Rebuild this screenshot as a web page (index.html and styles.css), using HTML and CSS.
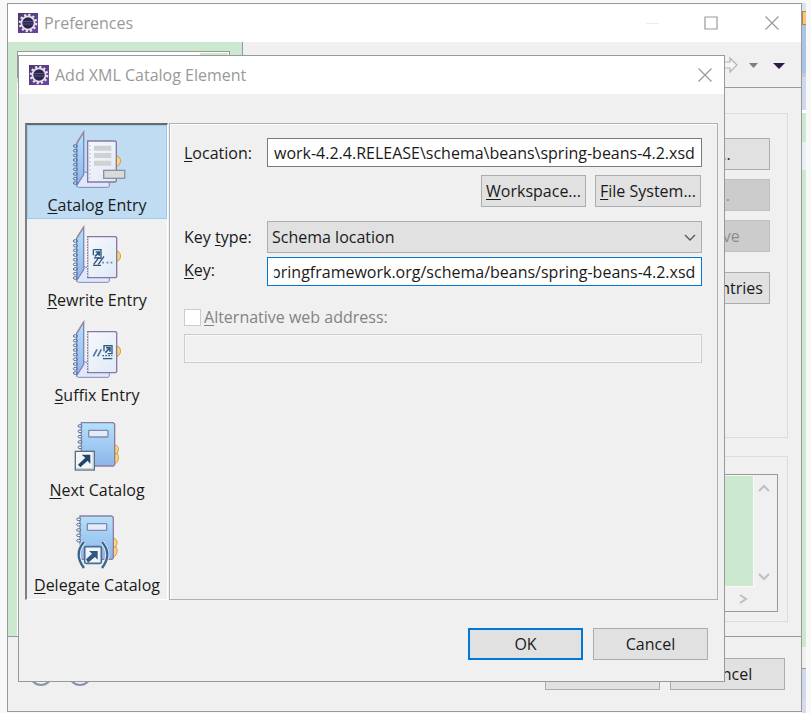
FILE: index.html
```
<!DOCTYPE html>
<html lang="en">
    <head>
        <meta charset="utf-8">
        <title>Preferences</title>
        <link rel="stylesheet" href="styles.css">
    </head>
    <body>
        <!-- shared drawings -->
        <svg class="defs" width="0" height="0" aria-hidden="true">
            <defs>
                <linearGradient id="cover" x1="0" y1="0" x2="0" y2="1">
                    <stop offset="0" stop-color="#b2e2fb"/>
                    <stop offset="1" stop-color="#8fb4ea"/>
                </linearGradient>
                <linearGradient id="page" x1="0" y1="0" x2="1" y2="1">
                    <stop offset="0" stop-color="#f6f9fd"/>
                    <stop offset="1" stop-color="#dfe9f7"/>
                </linearGradient>
                <linearGradient id="purple" x1="0" y1="0" x2="1" y2="1">
                    <stop offset="0" stop-color="#4a3a6c"/>
                    <stop offset="1" stop-color="#6c44a4"/>
                </linearGradient>
                <symbol id="logo" viewBox="0 0 20 20">
                    <rect width="20" height="20" fill="url(#purple)"/>
                    <circle cx="10" cy="10" r="8.200" fill="none" stroke="#e9e6ee" stroke-width="2.200" stroke-dasharray="2.150 2.150"/>
                    <circle cx="10" cy="10" r="6.600" fill="#2b2350" stroke="#e6e2ea" stroke-width="1.800"/>
                    <path d="M5 8.500h10M5 11h10" stroke="#5d5288" stroke-width="1.200"/>
                </symbol>
                <symbol id="close" viewBox="0 0 14 14">
                    <path d="M.5.5l13 13M13.5.5l-13 13" stroke="#999" stroke-width="1.200"/>
                </symbol>
                <!-- open notebook -->
                <g id="book">
                    <path d="M170 199l-2-6 24-38 76 24v20l-4 3h-88z" fill="#dfe7fa" stroke="#8587bd" stroke-width="3"/>
                    <path d="M170 70l21-34v128l-20 31z" fill="url(#cover)" stroke="#7f86bd" stroke-width="4"/>
                    <path d="M170 70l21-34" stroke="#a58a93" stroke-width="4"/>
                    <path d="M288 107c18 2 18 30 0 33z" fill="#fbd778" stroke="#cf9a45" stroke-width="3"/>
                    <g fill="none" stroke="#50719b" stroke-width="3">
                        <ellipse cx="166" cy="78" rx="6" ry="4"/><ellipse cx="166" cy="92" rx="6" ry="4"/>
                        <ellipse cx="166" cy="106" rx="6" ry="4"/><ellipse cx="166" cy="120" rx="6" ry="4"/>
                        <ellipse cx="166" cy="134" rx="6" ry="4"/><ellipse cx="166" cy="148" rx="6" ry="4"/>
                        <ellipse cx="166" cy="162" rx="6" ry="4"/><ellipse cx="166" cy="176" rx="6" ry="4"/>
                        <ellipse cx="166" cy="189" rx="6" ry="4"/>
                    </g>
                </g>
                <g id="sheet">
                    <path d="M203 65h84l3 3v117l-3 3h-84z" fill="url(#page)" stroke="#85799f" stroke-width="4"/>
                    <path d="M203 68v118" stroke="#f0f0f0" stroke-width="4" stroke-dasharray="3 5"/>
                </g>
                <!-- closed notebook, drawn in the frame of the next catalog icon -->
                <g id="closed">
                    <path d="M281 405c14-2 18 14 10 25c8 8 5 31-10 31z" fill="#fbd778" stroke="#cf9a45" stroke-width="3"/>
                    <path d="M281 431h12" stroke="#cf9a45" stroke-width="3"/>
                    <path d="M184 338h95l5 4v122l-4 4h-96z" fill="url(#cover)" stroke="#8f7d9f" stroke-width="4"/>
                    <rect x="206" y="361" width="58" height="20" rx="2" fill="#e0edfb" stroke="#8d84ae" stroke-width="4"/>
                    <g fill="#e8eef5" stroke="#50719b" stroke-width="3">
                        <ellipse cx="180" cy="348" rx="6" ry="4"/><ellipse cx="180" cy="364" rx="6" ry="4"/>
                        <ellipse cx="180" cy="380" rx="6" ry="4"/><ellipse cx="180" cy="396" rx="6" ry="4"/>
                        <ellipse cx="180" cy="412" rx="6" ry="4"/>
                    </g>
                </g>
            </defs>
        </svg>

        <div class="desktop">
            <div class="window preferences">
                <div class="titlebar">
                    <svg class="logo"><use href="#logo"/></svg>
                    <span class="title">Preferences</span>
                    <button class="caption" aria-label="Minimize"><svg width="14" height="14"><path d="M0 7.500h13" stroke="#ececec"/></svg></button>
                    <button class="caption" aria-label="Maximize"><svg width="14" height="14"><path d="M1 1h12v12H1z" fill="none" stroke="#999" stroke-width="1.200"/></svg></button>
                    <button class="caption" aria-label="Close"><svg width="14" height="14"><use href="#close"/></svg></button>
                </div>
                <div class="columns">
                    <div class="sidebar">
                        <div class="filter"><input type="text" aria-label="Filter"><i></i></div>
                        <div class="tree"></div>
                    </div>
                    <div class="details">
                        <div class="toolbar">
                            <svg width="64" height="18" viewBox="0 0 64 18">
                                <path d="M0 6h7V2l7 7-7 7v-4H0z" fill="#f5f5f5" stroke="#b3b3b3" stroke-width="1.200"/>
                                <path d="M26 7h9l-4.500 5z" fill="#7d7d7d"/>
                                <path d="M50 7h12l-6 6z" fill="#2d1846"/>
                            </svg>
                        </div>
                        <div class="group entries">
                            <button>Add...</button>
                            <button disabled>Edit...</button>
                            <button disabled>Remove</button>
                            <button class="reload">Reload Entries</button>
                        </div>
                        <div class="group">
                            <div class="viewer">
                                <div class="text"></div>
                                <div class="vscroll">
                                    <svg width="12" height="9"><path d="M1 8l5-5 5 5" fill="none" stroke="#bfbfbf" stroke-width="2"/></svg>
                                    <svg width="12" height="9"><path d="M1 2l5 5 5-5" fill="none" stroke="#bfbfbf" stroke-width="2"/></svg>
                                </div>
                                <div class="hscroll">
                                    <svg width="9" height="10"><path d="M1 1l6 4-6 4" fill="none" stroke="#bfbfbf" stroke-width="2"/></svg>
                                </div>
                            </div>
                        </div>
                    </div>
                </div>
                <div class="footer">
                    <svg class="help" width="64" height="26" viewBox="0 0 64 26">
                        <circle cx="12" cy="13" r="11" fill="none" stroke="#8795ab" stroke-width="2"/>
                        <circle cx="51" cy="13" r="11" fill="none" stroke="#8795ab" stroke-width="2"/>
                    </svg>
                    <button>OK</button>
                    <button>Cancel</button>
                </div>
            </div>
            <!-- edge of the window behind -->
            <div class="behind">
                <i class="sky"></i><i class="orange"></i><i class="blue"></i><i class="pale"></i>
                <i class="green"></i><i class="row"></i><i class="green tall"></i><i class="gap"></i><i class="pale last"></i>
            </div>
        </div>

        <div class="window dialog" role="dialog" aria-label="Add XML Catalog Element">
            <div class="titlebar">
                <svg class="logo"><use href="#logo"/></svg>
                <span class="title">Add XML Catalog Element</span>
                <button class="caption" aria-label="Close"><svg width="14" height="14"><use href="#close"/></svg></button>
            </div>
            <div class="content">
                <div class="kinds">
                    <button class="kind selected">
                        <svg viewBox="147 27 168 180">
                            <use href="#book"/>
                            <path d="M203 63h82l4 3v117l-4 3h-82z" fill="url(#page)" stroke="#85799f" stroke-width="4"/>
                            <path d="M210 76v108" stroke="#8d91c3" stroke-width="3" stroke-dasharray="3 9"/>
                            <path d="M222 77h52v15h-52zM222 99h52v15h-52zM222 122h52v15h-52z" fill="#d0d2d1"/>
                            <rect x="251" y="151" width="63" height="24" fill="#d9dbda" stroke="#8a949c" stroke-width="4"/>
                        </svg>
                        <span><u>C</u>atalog Entry</span>
                    </button>
                    <button class="kind">
                        <svg viewBox="147 27 168 180">
                            <use href="#book"/><use href="#sheet"/>
                            <g fill="none" stroke="#31587f" stroke-width="4">
                                <path d="M220 104h23v26h-12M220 104v17"/>
                                <path d="M225 124l12-12M227 111h11v11" stroke-width="5"/>
                                <path d="M222 129l14-1-15 20M252 124l-17 24M219 151h24"/>
                                <path d="M247 143h5M260 143h5M272 143h5" stroke="#5c86b3" stroke-width="5"/>
                            </g>
                        </svg>
                        <span><u>R</u>ewrite Entry</span>
                    </button>
                    <button class="kind">
                        <svg viewBox="147 27 168 180">
                            <use href="#book"/><use href="#sheet"/>
                            <g fill="none" stroke="#31587f" stroke-width="4">
                                <path d="M231 118l-11 21M244 118l-11 21" stroke-width="5" stroke="#4e789f"/>
                                <path d="M252 124v-17h24v24h-13M249 146h28"/>
                                <path d="M256 128l13-14M258 113h12v12" stroke-width="5"/>
                                <path d="M247 137h30" stroke-dasharray="5 4"/>
                            </g>
                        </svg>
                        <span><u>S</u>uffix Entry</span>
                    </button>
                    <button class="kind">
                        <svg viewBox="147 312 168 180">
                            <use href="#closed"/>
                            <rect x="166" y="424" width="57" height="56" fill="#f3f5f7" stroke="#5c7084" stroke-width="4"/>
                            <path d="M168 476h51v-50" fill="none" stroke="#c2cad1" stroke-width="3"/>
                            <path d="M174 464l22-21-11-9h26v28l-8-10-22 20z" fill="#1f456c"/>
                        </svg>
                        <span><u>N</u>ext Catalog</span>
                    </button>
                    <button class="kind">
                        <svg viewBox="147 87 168 180">
                            <use href="#closed" x="-4" y="-230"/>
                            <path d="M192 186q-32 36 0 78M246 186q32 36 0 78" fill="none" stroke="#e6eff9" stroke-width="12"/>
                            <path d="M192 186q-32 36 0 78M246 186q32 36 0 78" fill="none" stroke="#3d6386" stroke-width="7"/>
                            <rect x="194" y="200" width="50" height="50" rx="4" fill="#edf4fa" stroke="#496e8e" stroke-width="5"/>
                            <path d="M198 238l18-17-9-8h26v26l-8-8-21 17z" fill="#31587f"/>
                        </svg>
                        <span><u>D</u>elegate Catalog</span>
                    </button>
                </div>
                <form class="entry">
                    <label for="location"><u>L</u>ocation:</label>
                    <input type="text" id="location" value="work-4.2.4.RELEASE\schema\beans\spring-beans-4.2.xsd">
                    <div class="browse">
                        <button type="button"><u>W</u>orkspace...</button>
                        <button type="button"><u>F</u>ile System...</button>
                    </div>
                    <label for="keytype">Key <u>t</u>ype:</label>
                    <div class="drop">
                        <select id="keytype"><option>Schema location</option></select>
                        <svg width="12" height="8"><path d="M1 1l5 5 5-5" fill="none" stroke="#555" stroke-width="1.300"/></svg>
                    </div>
                    <label for="key"><u>K</u>ey:</label>
                    <input type="text" id="key" class="active" value="http://www.springframework.org/schema/beans/spring-beans-4.2.xsd">
                    <div class="alternative">
                        <input type="checkbox" id="alt" disabled>
                        <label for="alt"><u>A</u>lternative web address:</label>
                    </div>
                    <input type="text" class="address" aria-label="Alternative web address" disabled>
                </form>
            </div>
            <div class="actions">
                <button class="default">OK</button>
                <button>Cancel</button>
            </div>
        </div>
        <script>
            // long paths show their end, not their start
            ['location', 'key'].forEach(function (id) {
                var field = document.getElementById(id);
                field.scrollLeft = field.scrollWidth;
            });
        </script>
    </body>
</html>
```
FILE: styles.css
```
* {
    box-sizing: border-box;
}
body {
    margin: 0;
    background: #f8f8f8;
    color: #1a1a1a;
    font: 16px/24px "Open Sans", "Noto Sans", sans-serif;
    position: relative;
}
button, input, select {
    font: inherit;
    color: inherit;
    margin: 0;
    border-radius: 0;
}
button {
    height: 32px;
    padding: 0;
    background: #e1e1e1;
    border: 1px solid #adadad;
    line-height: 24px;
}
button:disabled {
    background: #ccc;
    border-color: #bfbfbf;
    color: #8c8c8c;
}
svg {
    display: block;
    flex: none;
}
u {
    text-underline-offset: 2px;
}
.defs {
    position: absolute;
}
.desktop {
    display: grid;
    grid-template-columns: 1fr 4px;
    min-height: 100vh;
    padding: 3px 5px 1px 7px;
}

/* windows */
.window {
    display: flex;
    flex-direction: column;
    background: #f0f0f0;
    border: 1px solid #999;
}
.titlebar {
    display: flex;
    align-items: center;
    height: 38px;
    padding-left: 10px;
    gap: 6px;
    background: #fff;
    color: #999;
}
.title {
    flex: 1;
}
.logo {
    width: 20px;
    height: 20px;
}
.caption {
    display: flex;
    align-items: center;
    justify-content: center;
    width: 52px;
    background: none;
    border: 0;
}
.preferences .caption:last-child {
    width: 58px;
}
.dialog .caption {
    width: 38px;
}

/* preferences */
.columns {
    display: flex;
    flex: 1;
    border-bottom: 1px solid #999;
}
.sidebar {
    display: flex;
    flex-direction: column;
    width: 235px;
    padding: 9px 12px 0 9px;
    gap: 5px;
    background: #cce8cf;
    border-right: 1px solid #999;
}
.filter {
    display: flex;
    height: 27px;
    padding: 1px;
    background: #fff;
    border: 1px solid #999;
}
.filter input {
    flex: 1;
    min-width: 0;
    border: 0;
}
.filter i {
    width: 28px;
    background: #cce8cf;
}
.tree {
    flex: 1;
    border: 1px solid #fff;
}
.details {
    flex: 1;
    display: flex;
    flex-direction: column;
    padding-bottom: 14px;
}
.toolbar {
    display: flex;
    justify-content: flex-end;
    align-items: center;
    height: 46px;
    padding-right: 14px;
    margin-bottom: 25px;
    border-bottom: 1px solid #999;
}
.group {
    margin: 0 13px 0 15px;
    padding: 17px 9px 9px;
    border: 1px solid #dcdcdc;
}
.entries {
    display: flex;
    flex-direction: column;
    align-items: flex-end;
    flex: 1;
    gap: 9px;
    margin-bottom: 18px;
    padding: 24px 17px;
}
.entries button {
    width: 121px;
}
.entries .reload {
    margin-top: 11px;
}
.viewer {
    display: grid;
    grid-template: 112px 1fr / 1fr 23px;
    height: 138px;
    background: #f0f0f0;
    border: 1px solid #999;
}
.text {
    background: #cce8cf;
    border: 1px solid #f8f8f8;
}
.vscroll {
    display: flex;
    flex-direction: column;
    justify-content: space-between;
    align-items: center;
    padding: 8px 3px 6px 0;
}
.hscroll {
    display: flex;
    justify-content: flex-end;
    align-items: center;
    padding-right: 6px;
}
.footer {
    display: flex;
    align-items: center;
    gap: 10px;
    height: 74px;
    padding: 0 16px 0 21px;
}
.footer button, .actions button {
    width: 115px;
}
.help {
    margin-right: auto;
}

/* strip at the right edge */
.behind {
    display: flex;
    flex-direction: column;
    margin-bottom: -1px;
}
.behind i {
    flex: none;
}
.sky { height: 8px; background: #d8e3ef; }
.orange { height: 14px; background: #f3c77c; border: 1px solid #b88742; border-right: 0; }
.blue { height: 48px; background: #aac5e3; }
.pale { height: 40px; background: #ccd9ee; border-top: 4px solid #c3c8db; border-bottom: 3px solid #fff; }
.green { height: 29px; background: #cce8cf; }
.row { height: 28px; background: #e7f0fa; }
.behind .tall { flex: 1; }
.gap { height: 22px; background: #f0f0f0; border-bottom: 1px solid #999; }
.last { height: 44px; border-top: 0; border-bottom: 14px solid #d5dbec; }

/* dialog lies over the preferences window */
.dialog {
    position: absolute;
    top: 55px;
    left: 18px;
    right: 86px;
}
.content {
    display: flex;
    gap: 1px;
    padding: 29px 6px 0;
}
.kinds {
    display: flex;
    flex-direction: column;
    gap: 1px;
    width: 143px;
    border: 1px solid #fff;
    border-top: 2px solid #696969;
    border-left: 2px solid #808080;
}
.kind {
    display: flex;
    flex-direction: column;
    align-items: center;
    gap: 4px;
    height: 94px;
    padding-top: 3px;
    background: none;
    border: 1px solid transparent;
    white-space: nowrap;
}
.kind svg {
    width: 56px;
    height: 60px;
    overflow: visible;
}
.selected {
    background: #bfdcf2;
    border-color: #99caf0;
}
.entry {
    flex: 1;
    display: grid;
    grid-template-columns: 83px 1fr;
    align-content: start;
    align-items: center;
    padding: 14px 15px 14px 14px;
    border: 1px solid #adb0b5;
    box-shadow: inset 1px 1px #fff;
}
.entry input[type=text] {
    width: 100%;
    min-width: 0;
    height: 29px;
    padding: 0 6px;
    background: #fff;
    border: 1px solid #7a7a7a;
}
.entry input.active {
    margin-top: 4px;
    border-color: #0078d7;
}
.browse {
    grid-column: 1 / 3;
    display: flex;
    justify-content: flex-end;
    gap: 9px;
    margin: 8px 1px 14px 0;
}
.browse button {
    padding: 0 4px;
}
.drop {
    position: relative;
}
.drop select {
    appearance: none;
    display: block;
    width: 100%;
    height: 32px;
    padding: 0 4px;
    background: #e1e1e1;
    border: 1px solid #adadad;
}
.drop svg {
    position: absolute;
    right: 6px;
    top: 13px;
    pointer-events: none;
}
.alternative {
    grid-column: 1 / 3;
    display: flex;
    align-items: center;
    gap: 3px;
    margin: 19px 0 5px;
    color: #838383;
}
.alternative input {
    appearance: none;
    width: 17px;
    height: 17px;
    background: #fff;
    border: 1px solid #ccc;
}
.entry input.address {
    grid-column: 1 / 3;
    background: #f0f0f0;
    border-color: #ccc;
    box-shadow: inset 0 0 0 1px #f8f8f8;
}
.actions {
    display: flex;
    justify-content: flex-end;
    gap: 10px;
    padding: 28px 16px 21px;
}
.actions .default {
    border: 2px solid #0078d7;
}
```
